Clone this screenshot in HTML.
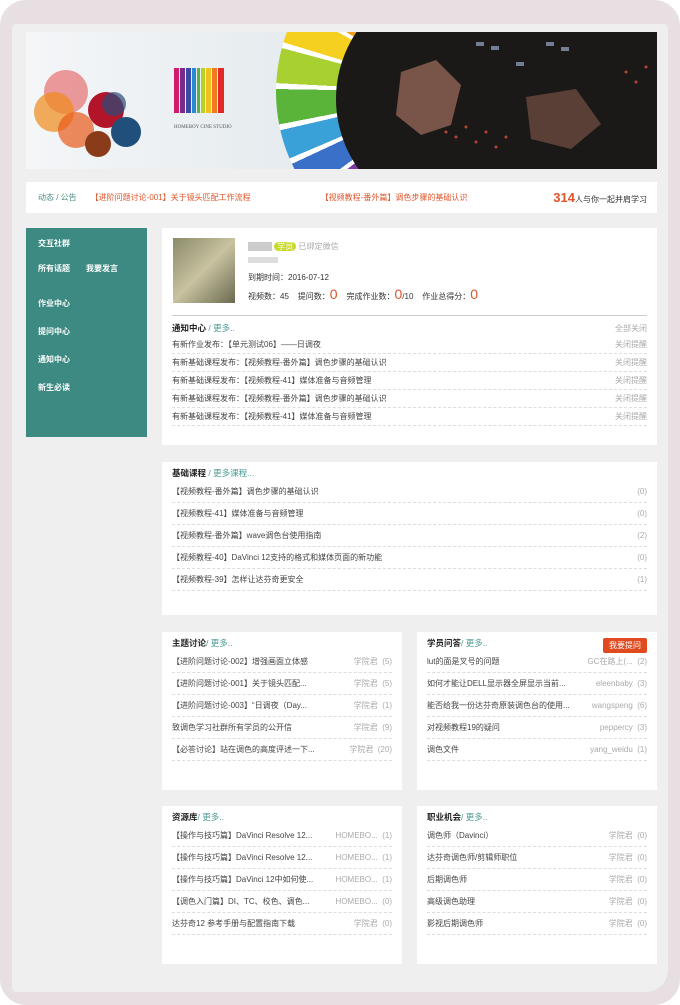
<!DOCTYPE html>
<html><head><meta charset="utf-8"><style>
*{margin:0;padding:0;box-sizing:border-box}
body{width:680px;height:1005px;background:#fff;font-family:"Liberation Sans","Noto Sans CJK SC",sans-serif;font-size:8px;color:#333;position:relative;overflow:hidden}
.frame{position:absolute;left:0;top:0;width:680px;height:1005px;border-radius:26px;background:#e8dfe2}
.inner{position:absolute;left:12px;top:24px;width:656px;height:968px;background:#f0eff0;border-radius:4px 4px 22px 4px}
.abs{position:absolute}
.panel{position:absolute;background:#fff}
.row{display:flex;justify-content:space-between;border-bottom:1px dashed #ddd;height:22px;align-items:center;color:#444}
.row .r{color:#aaa}
.h{font-weight:bold;color:#222;font-size:8.5px}
.h span{font-weight:normal;color:#4a9a92}
.side div{color:#fff;font-weight:bold;height:28px;padding-left:12px;display:flex;align-items:center}
</style></head><body>
<div class="frame"></div>
<div class="inner"></div>
<!-- banner -->
<div class="abs" style="left:26px;top:32px;width:631px;height:137px;background:linear-gradient(90deg,#f4f6f8,#e6ecef 40%,#e9edf0 45%);overflow:hidden">
 <svg width="631" height="137" style="position:absolute;left:0;top:0">
  <circle cx="40" cy="60" r="22" fill="#e23b3b" opacity=".5"/>
  <circle cx="28" cy="80" r="20" fill="#ef8a1a" opacity=".7"/>
  <circle cx="50" cy="98" r="18" fill="#e85a1a" opacity=".7"/>
  <circle cx="80" cy="78" r="18" fill="#b2152a"/>
  <circle cx="88" cy="72" r="12" fill="#2a4c7a" opacity=".7"/>
  <circle cx="100" cy="100" r="15" fill="#1f4f7a"/>
  <circle cx="72" cy="112" r="13" fill="#8a3b1a"/>
  <g transform="translate(148,36)">
   <rect x="0" y="0" width="5" height="45" fill="#d01a6a"/><rect x="6" y="0" width="5" height="45" fill="#7a2a8a"/><rect x="12" y="0" width="5" height="45" fill="#3a4aa8"/><rect x="18" y="0" width="4" height="45" fill="#2a8ad0"/><rect x="23" y="0" width="3" height="45" fill="#5ab04a"/><rect x="27" y="0" width="4" height="45" fill="#b8d020"/><rect x="32" y="0" width="5" height="45" fill="#f0c020"/><rect x="38" y="0" width="5" height="45" fill="#f07a20"/><rect x="44" y="0" width="6" height="45" fill="#e02a2a"/>
  </g>
  <text x="148" y="96" font-size="5" fill="#555" font-family="Liberation Serif">HOMEBOY CINE STUDIO</text>
 </svg>
 <div style="position:absolute;left:250px;top:-110px;width:340px;height:340px;border-radius:50%;background:conic-gradient(from 195deg,#e0207a 0 25deg,#fff 25deg 27deg,#7a3aa0 27deg 37deg,#fff 37deg 39deg,#3a70c8 39deg 50deg,#fff 50deg 52deg,#3aa0d8 52deg 62deg,#fff 62deg 64deg,#5ab43a 64deg 76deg,#fff 76deg 78deg,#a8d030 78deg 90deg,#fff 90deg 92deg,#f6d020 92deg 104deg,#fff 104deg 106deg,#f5a01a 106deg 118deg,#fff 118deg 120deg,#e8621f 120deg 135deg,#e02a2a 135deg 150deg,transparent 150deg)"></div>
 <div style="position:absolute;left:310px;top:-53px;width:240px;height:240px;border-radius:50%;background:#1b1818"></div>
 <div style="position:absolute;left:430px;top:0;width:201px;height:137px;background:#1b1818"></div>
 <svg width="631" height="137" style="position:absolute;left:0;top:0">
  <path d="M375 40 l35 -12 l25 25 l-10 40 l-30 10 l-25 -20Z" fill="#9a6a5a" opacity=".75"/>
  <path d="M500 65 l50 -8 l25 35 l-30 25 l-40 -10Z" fill="#6a4a40" opacity=".8"/>
  <g fill="#e0503a" opacity=".8"><circle cx="420" cy="100" r="1.5"/><circle cx="430" cy="105" r="1.5"/><circle cx="440" cy="95" r="1.5"/><circle cx="450" cy="110" r="1.5"/><circle cx="460" cy="100" r="1.5"/><circle cx="470" cy="115" r="1.5"/><circle cx="480" cy="105" r="1.5"/><circle cx="600" cy="40" r="1.5"/><circle cx="610" cy="50" r="1.5"/><circle cx="620" cy="35" r="1.5"/></g>
  <g fill="#9aa8c8" opacity=".7"><rect x="450" y="10" width="8" height="4"/><rect x="465" y="14" width="8" height="4"/><rect x="520" y="10" width="8" height="4"/><rect x="535" y="15" width="8" height="4"/><rect x="490" y="30" width="8" height="4"/></g>
 </svg>
</div>
<!-- notice bar -->
<div class="panel" style="left:26px;top:182px;width:631px;height:31px;display:flex;align-items:center;padding-left:12px">
 <span style="color:#4a8a84">动态 / 公告</span>
 <span style="color:#e0542a;margin-left:14px">【进阶问题讨论-001】关于镜头匹配工作流程</span>
 <span style="color:#e0542a;margin-left:70px">【视频教程-番外篇】调色步骤的基础认识</span>
 <span style="position:absolute;right:10px;top:8px;color:#333"><b style="color:#e0542a;font-size:13px">314</b>人与你一起并肩学习</span>
</div>
<!-- sidebar -->
<div class="panel side" style="left:26px;top:228px;width:121px;height:209px;background:#3d8a83;padding-top:1px">
 <div>交互社群</div>
 <div style="height:32px;align-items:flex-start;padding-top:6px">所有话题<span style="margin-left:16px">我要发言</span></div>
 <div>作业中心</div><div>提问中心</div><div>通知中心</div><div>新生必读</div>
</div>
<!-- main profile -->
<div class="panel" style="left:162px;top:228px;width:495px;height:217px;padding:10px 10px 0 10px">
 <div style="position:absolute;left:11px;top:10px;width:62px;height:65px;background:linear-gradient(135deg,#8a8a6a,#c8c2a0 50%,#6a6a50)"></div>
 <div style="position:absolute;left:86px;top:13px;color:#aaa"><span style="background:#ccc;color:#ccc">用户名</span> <span style="background:#c9d92a;color:#fff;border-radius:6px;padding:0 3px">学员</span> 已绑定微信</div>
 <div style="position:absolute;left:86px;top:29px;color:#ccc;background:#ddd;width:30px;height:6px"></div>
 <div style="position:absolute;left:86px;top:44px">到期时间：2016-07-12</div>
 <div style="position:absolute;left:86px;top:58px">视频数：45 &nbsp;&nbsp; 提问数：<b style="color:#e0542a;font-size:14px;font-weight:normal">0</b> &nbsp;&nbsp; 完成作业数：<b style="color:#e0542a;font-size:14px;font-weight:normal">0</b>/10 &nbsp;&nbsp; 作业总得分：<b style="color:#e0542a;font-size:14px;font-weight:normal">0</b></div>
 <div style="position:absolute;left:10px;right:10px;top:87px;border-top:1px solid #ccc"></div>
 <div style="position:absolute;left:10px;right:10px;top:92px">
  <div style="display:flex;justify-content:space-between;height:16px;align-items:center"><span class="h">通知中心<span> / 更多..</span></span><span style="color:#aaa">全部关闭</span></div>
  <div class="row" style="height:18px"><span>有新作业发布：【单元测试06】——日调夜</span><span class="r">关闭提醒</span></div>
  <div class="row" style="height:18px"><span>有新基础课程发布：【视频教程-番外篇】调色步骤的基础认识</span><span class="r">关闭提醒</span></div>
  <div class="row" style="height:18px"><span>有新基础课程发布：【视频教程-41】媒体准备与音频管理</span><span class="r">关闭提醒</span></div>
  <div class="row" style="height:18px"><span>有新基础课程发布：【视频教程-番外篇】调色步骤的基础认识</span><span class="r">关闭提醒</span></div>
  <div class="row" style="height:18px"><span>有新基础课程发布：【视频教程-41】媒体准备与音频管理</span><span class="r">关闭提醒</span></div>
 </div>
</div>
<!-- basic courses -->
<div class="panel" style="left:162px;top:462px;width:495px;height:153px;padding:5px 10px 0 10px">
 <div class="h" style="height:14px">基础课程<span> / 更多课程...</span></div>
 <div class="row"><span>【视频教程-番外篇】调色步骤的基础认识</span><span class="r">(0)</span></div>
 <div class="row"><span>【视频教程-41】媒体准备与音频管理</span><span class="r">(0)</span></div>
 <div class="row"><span>【视频教程-番外篇】wave调色台使用指南</span><span class="r">(2)</span></div>
 <div class="row"><span>【视频教程-40】DaVinci 12支持的格式和媒体页面的新功能</span><span class="r">(0)</span></div>
 <div class="row"><span>【视频教程-39】怎样让达芬奇更安全</span><span class="r">(1)</span></div>
</div>
<!-- four panels -->
<div class="panel" style="left:162px;top:632px;width:240px;height:158px;padding:5px 10px 0 10px">
 <div class="h" style="height:14px">主题讨论<span>/ 更多..</span></div>
 <div class="row"><span>【进阶问题讨论-002】增强画面立体感</span><span class="r">学院君 &nbsp;(5)</span></div>
 <div class="row"><span>【进阶问题讨论-001】关于镜头匹配...</span><span class="r">学院君 &nbsp;(5)</span></div>
 <div class="row"><span>【进阶问题讨论-003】“日调夜（Day...</span><span class="r">学院君 &nbsp;(1)</span></div>
 <div class="row"><span>致调色学习社群所有学员的公开信</span><span class="r">学院君 &nbsp;(9)</span></div>
 <div class="row"><span>【必答讨论】站在调色的高度评述一下...</span><span class="r">学院君 &nbsp;(20)</span></div>
</div>
<div class="panel" style="left:417px;top:632px;width:240px;height:158px;padding:5px 10px 0 10px">
 <div class="h" style="height:14px">学员问答<span>/ 更多..</span></div>
 <div style="position:absolute;right:10px;top:6px;background:#e04a1e;color:#fff;padding:2px 6px;border-radius:2px">我要提问</div>
 <div class="row"><span>lut的面是叉号的问题</span><span class="r">GC在路上(... &nbsp;(2)</span></div>
 <div class="row"><span>如何才能让DELL显示器全屏显示当前...</span><span class="r">eleenbaby &nbsp;(3)</span></div>
 <div class="row"><span>能否给我一份达芬奇原装调色台的使用...</span><span class="r">wangspeng &nbsp;(6)</span></div>
 <div class="row"><span>对视频教程19的疑问</span><span class="r">peppercy &nbsp;(3)</span></div>
 <div class="row"><span>调色文件</span><span class="r">yang_weidu &nbsp;(1)</span></div>
</div>
<div class="panel" style="left:162px;top:806px;width:240px;height:158px;padding:5px 10px 0 10px">
 <div class="h" style="height:14px">资源库<span>/ 更多..</span></div>
 <div class="row"><span>【操作与技巧篇】DaVinci Resolve 12...</span><span class="r">HOMEBO... &nbsp;(1)</span></div>
 <div class="row"><span>【操作与技巧篇】DaVinci Resolve 12...</span><span class="r">HOMEBO... &nbsp;(1)</span></div>
 <div class="row"><span>【操作与技巧篇】DaVinci 12中如何使...</span><span class="r">HOMEBO... &nbsp;(1)</span></div>
 <div class="row"><span>【调色入门篇】DI、TC、校色、调色...</span><span class="r">HOMEBO... &nbsp;(0)</span></div>
 <div class="row"><span>达芬奇12 参考手册与配置指南下载</span><span class="r">学院君 &nbsp;(0)</span></div>
</div>
<div class="panel" style="left:417px;top:806px;width:240px;height:158px;padding:5px 10px 0 10px">
 <div class="h" style="height:14px">职业机会<span>/ 更多..</span></div>
 <div class="row"><span>调色师（Davinci）</span><span class="r">学院君 &nbsp;(0)</span></div>
 <div class="row"><span>达芬奇调色师/剪辑师职位</span><span class="r">学院君 &nbsp;(0)</span></div>
 <div class="row"><span>后期调色师</span><span class="r">学院君 &nbsp;(0)</span></div>
 <div class="row"><span>高级调色助理</span><span class="r">学院君 &nbsp;(0)</span></div>
 <div class="row"><span>影视后期调色师</span><span class="r">学院君 &nbsp;(0)</span></div>
</div>
</body></html>
